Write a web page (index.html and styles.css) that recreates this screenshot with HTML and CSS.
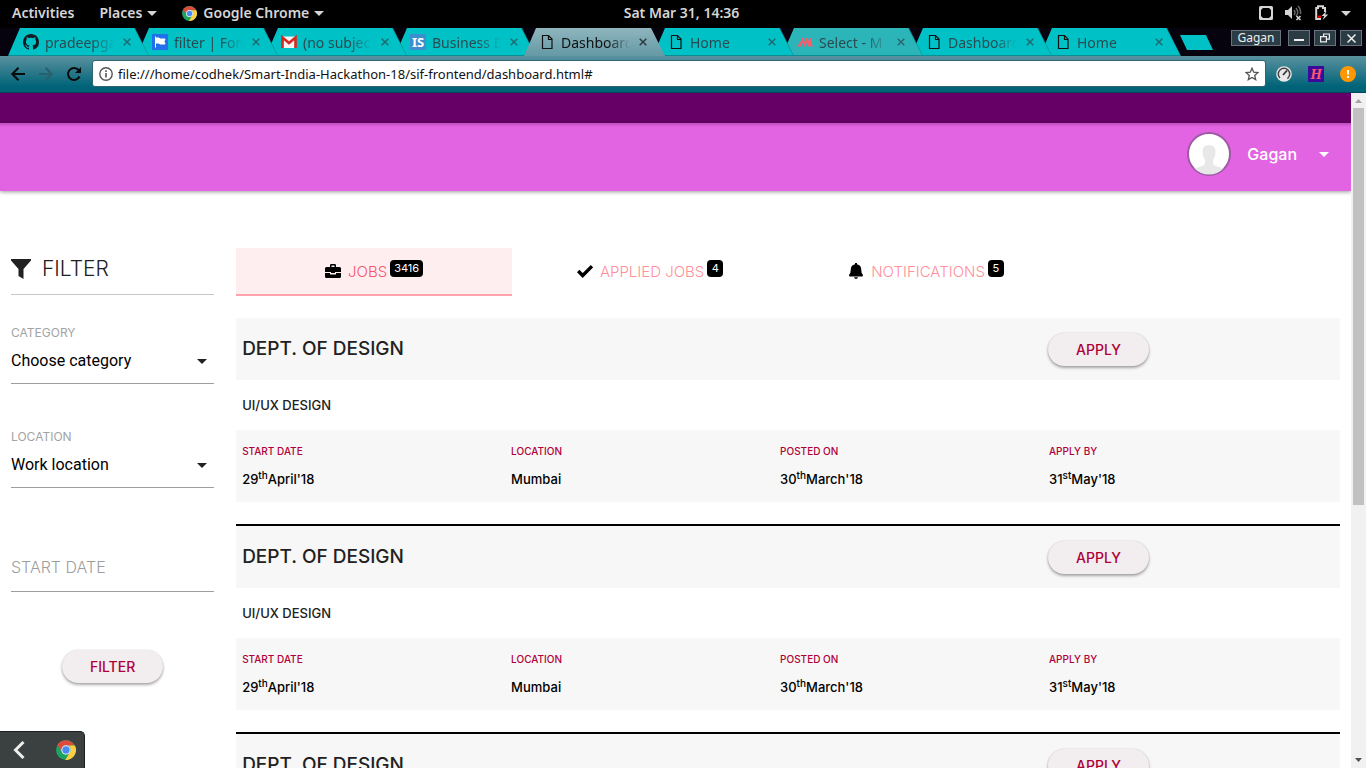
FILE: index.html
```html
<!DOCTYPE html>
<html lang="en">
<head>
<meta charset="utf-8">
<title>Dashboard</title>
<link rel="stylesheet" href="styles.css">
</head>
<body>
<svg class="defs" aria-hidden="true">
  <symbol id="chrome" viewBox="0 0 20 20">
    <circle cx="10" cy="10" r="10" fill="#1da261"/>
    <path d="M1.5 4.7A10 10 0 0 1 18.7 5.5H10A4.6 4.6 0 0 0 5.7 11.8z" fill="#dd4b3e"/>
    <path d="M18.9 5.5A10 10 0 0 1 9.2 20L14.2 12A4.6 4.6 0 0 0 12 5.5z" fill="#ffcd42"/>
    <circle cx="10" cy="10" r="4.7" fill="#f1f1f1"/><circle cx="10" cy="10" r="3.7" fill="#4a8af4"/>
  </symbol>
  <symbol id="page" viewBox="0 0 16 16"><path d="M3.5 1.5h6l3.500 3.500v9.500h-9.500zM9.500 1.500v4h3.500" fill="none" stroke="#111" stroke-width="1.200"/></symbol>
  <symbol id="close" viewBox="0 0 8 8"><path d="M.7.7l6.600 6.600M7.300.7L.7 7.300" stroke="currentColor" stroke-width="1.400"/></symbol>
  <symbol id="caret" viewBox="0 0 10 5"><path d="M0 0h10L5 5z" fill="currentColor"/></symbol>
</svg>

<header class="desk-bar">
  <div class="desk-menu">
    <button class="desk-btn">Activities</button>
    <button class="desk-btn">Places <svg class="caret"><use href="#caret"/></svg></button>
    <button class="desk-btn"><svg class="desk-logo"><use href="#chrome"/></svg>Google Chrome <svg class="caret"><use href="#caret"/></svg></button>
  </div>
  <time class="clock">Sat Mar 31, 14:36</time>
  <div class="desk-status">
    <svg width="14" height="14" viewBox="0 0 14 14"><rect x="1" y="1" width="12" height="12" rx=".5" fill="none" stroke="#d5d5d5" stroke-width="2"/><path d="M2 2h2L2 4zM12 2h-2L12 4zM2 12v-2L4 12zM12 12v-2L10 12z" fill="#d5d5d5"/></svg>
    <svg width="17" height="16" viewBox="0 0 17 16"><path d="M0 5h3l4-4v13l-4-4H0z" fill="#d5d5d5"/><path d="M9 5q2 2.500 0 5M11 3q3.500 4.500 0 8M13 1q3 3 2.500 8" fill="none" stroke="#666" stroke-width="1.500"/><path d="M11.500 11l4 4M15.500 11l-4 4" stroke="#d5d5d5" stroke-width="1.600"/></svg>
    <svg width="15" height="16" viewBox="0 0 15 16"><path d="M7 14H2.200V3H4V1.200h5V3h2v4" fill="none" stroke="#d5d5d5" stroke-width="2"/><path d="M3.500 10.500H7V13H3.500z" fill="#d00"/><path d="M12.500 6L7.500 11h2.700l-1.500 4 5.500-5.500h-3z" fill="#d5d5d5"/></svg>
    <svg class="caret"><use href="#caret"/></svg>
  </div>
</header>

<div class="tab-strip">
  <nav class="tabs" aria-label="Browser tabs">
    <a class="tab z9" href="#"><svg class="favicon" viewBox="0 0 16 16"><path fill="#161b22" d="M8 0C3.580 0 0 3.580 0 8c0 3.540 2.290 6.530 5.470 7.590.4.070.55-.17.55-.38 0-.19-.01-.82-.01-1.490-2.010.37-2.530-.49-2.690-.94-.09-.23-.48-.94-.82-1.130-.28-.15-.68-.52-.01-.53.63-.01 1.080.58 1.230.82.72 1.210 1.870.87 2.330.66.070-.52.28-.87.51-1.070-1.780-.2-3.640-.89-3.640-3.950 0-.87.31-1.590.82-2.150-.08-.2-.36-1.020.08-2.120 0 0 .67-.21 2.200.82.64-.18 1.320-.27 2-.27.68 0 1.360.09 2 .27 1.530-1.040 2.200-.82 2.200-.82.44 1.100.16 1.920.08 2.120.51.56.82 1.270.82 2.150 0 3.070-1.870 3.750-3.650 3.950.29.25.54.73.54 1.480 0 1.070-.01 1.930-.01 2.200 0 .21.15.46.55.38A8.012 8.012 0 0 0 16 8c0-4.420-3.580-8-8-8z"/></svg><span class="tab-text">pradeepga</span><svg class="tab-close"><use href="#close"/></svg></a>
    <a class="tab z8" href="#"><svg class="favicon" viewBox="0 0 16 16"><rect width="16" height="16" rx="1" fill="#2370ed"/><path d="M3.500 2.500v11M3.500 4H7l1 1h5l-1 2.500 1 2.500H8L7 9H3.500z" fill="#fff" stroke="#fff" stroke-width="1"/></svg><span class="tab-text">filter | Fon</span><svg class="tab-close"><use href="#close"/></svg></a>
    <a class="tab z7" href="#"><svg class="favicon" viewBox="0 0 16 16"><path d="M1 2.500h14V14H1z" fill="#f4f4f4"/><path d="M1.500 14V3.500L8 9l6.500-5.500V14" fill="none" stroke="#d9281f" stroke-width="2.600"/></svg><span class="tab-text">(no subjec</span><svg class="tab-close"><use href="#close"/></svg></a>
    <a class="tab z6" href="#"><span class="favicon fav-is">IS</span><span class="tab-text">Business D</span><svg class="tab-close"><use href="#close"/></svg></a>
    <a class="tab tab-active" href="#" aria-current="page"><svg class="favicon"><use href="#page"/></svg><span class="tab-text">Dashboard</span><svg class="tab-close"><use href="#close"/></svg></a>
    <a class="tab z5" href="#"><svg class="favicon"><use href="#page"/></svg><span class="tab-text">Home</span><svg class="tab-close"><use href="#close"/></svg></a>
    <a class="tab tab-hazy z4" href="#"><svg class="favicon" viewBox="0 0 16 16"><path d="M1 11.500h2.500L5.500 5l2 6.500L9.500 5l1.800 6.500L13 5l1 6.500h1.500" fill="none" stroke="#f2606e" stroke-width="2.200" stroke-linejoin="round"/></svg><span class="tab-text">Select - M</span><svg class="tab-close"><use href="#close"/></svg></a>
    <a class="tab z3" href="#"><svg class="favicon"><use href="#page"/></svg><span class="tab-text">Dashboard</span><svg class="tab-close"><use href="#close"/></svg></a>
    <a class="tab z2" href="#"><svg class="favicon"><use href="#page"/></svg><span class="tab-text">Home</span><svg class="tab-close"><use href="#close"/></svg></a>
    <button class="new-tab" aria-label="New tab"></button>
  </nav>
  <div class="window-controls">
    <button class="win-btn win-user">Gagan</button>
    <button class="win-btn" aria-label="Minimize"><svg width="10" height="10" viewBox="0 0 10 10"><path d="M0 7h10" stroke="#eee" stroke-width="2"/></svg></button>
    <button class="win-btn" aria-label="Restore"><svg width="10" height="10" viewBox="0 0 10 10"><path d="M.6 3.600h5.800v5.200H.6zM3.600 3.500V1h5.800v5.200h-3" fill="none" stroke="#eee" stroke-width="1.200"/></svg></button>
    <button class="win-btn" aria-label="Close window"><svg width="9" height="9" viewBox="0 0 9 9"><path d="M.5.500l8 8M8.500.500l-8 8" stroke="#eee" stroke-width="1.500"/></svg></button>
  </div>
</div>

<div class="toolbar">
  <button class="nav-btn" aria-label="Back"><svg width="16" height="16" viewBox="0 0 16 16"><path d="M15 8H2.500M8.500 1.800L2.300 8l6.200 6.200" fill="none" stroke="#0a0a0a" stroke-width="2"/></svg></button>
  <button class="nav-btn" aria-label="Forward"><svg width="16" height="16" viewBox="0 0 16 16"><path d="M1 8h12.500M7.500 1.800L13.700 8l-6.200 6.200" fill="none" stroke="#2a5f6c" stroke-width="2"/></svg></button>
  <button class="nav-btn" aria-label="Reload"><svg width="16" height="16" viewBox="0 0 16 16"><path d="M13.500 10.500A6 6 0 1 1 12.800 4.300" fill="none" stroke="#0a0a0a" stroke-width="2"/><path d="M15 1v6H9z" fill="#0a0a0a"/></svg></button>
  <div class="address">
    <svg width="14" height="14" viewBox="0 0 14 14"><circle cx="7" cy="7" r="6.200" fill="none" stroke="#555" stroke-width="1.400"/><path d="M7 6v4.500M7 3.300v1.600" stroke="#555" stroke-width="1.600"/></svg>
    <input class="url" aria-label="Address" value="file:///home/codhek/Smart-India-Hackathon-18/sif-frontend/dashboard.html#">
    <svg width="14" height="14" viewBox="0 0 14 14"><path d="M7 1.200l1.700 4 4.300.4-3.300 2.800 1 4.200L7 10.400l-3.700 2.200 1-4.200L1 5.600l4.300-.4z" fill="none" stroke="#555" stroke-width="1.300"/></svg>
  </div>
  <div class="extensions">
    <svg width="16" height="16" viewBox="0 0 16 16"><circle cx="8" cy="8" r="7.800" fill="#e8e8e8"/><circle cx="8" cy="8" r="5.700" fill="none" stroke="#444" stroke-width="1.500" stroke-dasharray="27 9" transform="rotate(135 8 8)"/><path d="M7 9l4-4.500" stroke="#333" stroke-width="1.800"/></svg>
    <span class="ext-h">H</span>
    <svg width="16" height="16" viewBox="0 0 16 16"><circle cx="8" cy="8" r="8" fill="#ff9800"/><path d="M8 4v4.500M8 10v2" stroke="#fff" stroke-width="2"/></svg>
  </div>
</div>

<div class="viewport">
  <div class="page">
    <div class="status-strip"></div>
    <nav class="navbar">
      <svg class="avatar" viewBox="0 0 44 44"><defs><clipPath id="face"><circle cx="22" cy="22" r="20.500"/></clipPath></defs><circle cx="22" cy="22" r="21" fill="#fff" stroke="#9c5aa4" stroke-width="2"/><path clip-path="url(#face)" d="M15.500 19q0-6 6.500-6t6.500 6-2.500 9v3q0 2 4 3.500 8 2 11 4.500v6H3v-6q3-2.500 11-4.500 4-1.500 4-3.500v-3q-2.500-3-2.500-9z" fill="#e8e8e8"/></svg>
      <a class="user-link" href="#">Gagan <svg class="caret"><use href="#caret"/></svg></a>
    </nav>

    <div class="layout">
      <form class="sidebar">
        <h1 class="filter-title"><svg width="20" height="20" viewBox="0 0 20 20"><path d="M0 0h20v1.500L12.500 10v10L7.500 17v-7L0 1.500z" fill="#212121"/></svg>FILTER</h1>
        <div class="field">
          <label class="field-label" for="category">CATEGORY</label>
          <div class="select-box"><select class="control" id="category"><option>Choose category</option></select><svg class="caret"><use href="#caret"/></svg></div>
        </div>
        <div class="field">
          <label class="field-label" for="location">LOCATION</label>
          <div class="select-box"><select class="control" id="location"><option>Work location</option></select><svg class="caret"><use href="#caret"/></svg></div>
        </div>
        <div class="field">
          <input class="control date" id="start" type="text" placeholder="START DATE" aria-label="Start date">
        </div>
        <button class="pill" type="button">FILTER</button>
      </form>

      <main class="main">
        <nav class="sections">
          <a class="section section-on" href="#"><svg width="16" height="16" viewBox="0 0 16 16"><path d="M5 4V2.200Q5 1 6.200 1h3.600Q11 1 11 2.200V4h3.500Q16 4 16 5.500V9H10v1H6V9H0V5.500Q0 4 1.500 4zM6.500 4h3V2.500h-3zM0 10h5v1.500h6V10h5v3.500q0 1.500-1.500 1.500h-13Q0 15 0 13.500z" fill="#000" fill-rule="evenodd"/></svg>JOBS<span class="badge">3416</span></a>
          <a class="section" href="#"><svg width="16" height="16" viewBox="0 0 16 16"><path d="M1.200 8L5.700 12.500 15 3.200" fill="none" stroke="#000" stroke-width="3.400"/></svg>APPLIED JOBS<span class="badge">4</span></a>
          <a class="section" href="#"><svg width="16" height="16" viewBox="0 0 16 16"><path d="M7 0h2v1.200q4.200 1 4.200 5 0 4 1.600 5.300Q15.500 13.500 14 13.500H2Q.5 13.500 1.200 11.500 2.800 10.200 2.800 6.200q0-4 4.200-5zM6 14.200h4Q9.500 16 8 16t-2-1.800z" fill="#000"/></svg>NOTIFICATIONS<span class="badge">5</span></a>
        </nav>

        <article class="job">
          <header class="job-head"><h2 class="dept">DEPT. OF DESIGN</h2><div class="job-action"><button class="pill">APPLY</button></div></header>
          <h3 class="role">UI/UX DESIGN</h3>
          <table class="facts">
            <thead><tr><th>START DATE</th><th>LOCATION</th><th>POSTED ON</th><th>APPLY BY</th></tr></thead>
            <tbody><tr><td>29<sup>th</sup>April'18</td><td>Mumbai</td><td>30<sup>th</sup>March'18</td><td>31<sup>st</sup>May'18</td></tr></tbody>
          </table>
        </article>
        <article class="job">
          <header class="job-head"><h2 class="dept">DEPT. OF DESIGN</h2><div class="job-action"><button class="pill">APPLY</button></div></header>
          <h3 class="role">UI/UX DESIGN</h3>
          <table class="facts">
            <thead><tr><th>START DATE</th><th>LOCATION</th><th>POSTED ON</th><th>APPLY BY</th></tr></thead>
            <tbody><tr><td>29<sup>th</sup>April'18</td><td>Mumbai</td><td>30<sup>th</sup>March'18</td><td>31<sup>st</sup>May'18</td></tr></tbody>
          </table>
        </article>
        <article class="job">
          <header class="job-head"><h2 class="dept">DEPT. OF DESIGN</h2><div class="job-action"><button class="pill">APPLY</button></div></header>
        </article>
      </main>
    </div>
  </div>
  <div class="scrollbar" aria-hidden="true">
    <svg class="scroll-arrow" viewBox="0 0 15 15"><path d="M4 10h7L7.500 6z" fill="#a3a3a3"/></svg>
    <div class="scroll-track"><div class="scroll-thumb"></div><div class="scroll-rest"></div></div>
    <svg class="scroll-arrow" viewBox="0 0 15 15"><path d="M4 5h7L7.500 9z" fill="#505050"/></svg>
  </div>
</div>

<div class="dock">
  <svg width="12" height="18" viewBox="0 0 12 18"><path d="M10.500 1L2.500 9l8 8" fill="none" stroke="#eeeeec" stroke-width="3"/></svg>
  <svg width="20" height="20"><use href="#chrome"/></svg>
</div>
</body>
</html>
```
FILE: styles.css
```css
* { box-sizing: border-box; }
html, body { height: 100%; }
body {
  margin: 0;
  display: flex;
  flex-direction: column;
  overflow: hidden;
  background: #fff;
  font-family: Inter, "Open Sans", sans-serif;
  color: #212121;
}
button, input, select { font: inherit; margin: 0; }
button { border: 0; padding: 0; background: none; cursor: pointer; }
a { color: inherit; text-decoration: none; }
svg { flex: none; display: block; }
.defs { position: absolute; width: 0; height: 0; }
.caret { width: 10px; height: 5px; }

/* Desktop bar */
.desk-bar {
  flex: none;
  height: 28px;
  padding: 0 15px 2px 12px;
  display: grid;
  grid-template-columns: 1fr auto 1fr;
  align-items: center;
  background: #000;
  color: #d5d5d5;
  font: 600 14px/20px "Noto Sans", "Open Sans", sans-serif;
}
.desk-menu { display: flex; gap: 25px; }
.desk-btn { display: flex; align-items: center; gap: 5px; color: inherit; }
.desk-logo { width: 15px; height: 15px; margin-right: 1px; }
.desk-status { display: flex; justify-content: flex-end; align-items: center; gap: 12px; }

/* Browser tabs */
.tab-strip {
  flex: none;
  height: 28px;
  display: flex;
  justify-content: space-between;
  background: #06030f;
  font-family: "Noto Sans", "Open Sans", sans-serif;
}
.tabs { display: flex; flex: 1; min-width: 0; padding-left: 8px; }
.tab {
  position: relative;
  isolation: isolate;
  flex: 0 1 141px;
  min-width: 0;
  margin-right: -12px;
  padding: 0 18px 0 15px;
  display: flex;
  align-items: center;
  gap: 6px;
  background: #078e94;
  color: #2b4a50;
  font-size: 14px;
  clip-path: polygon(0 100%, 12px 0, calc(100% - 14px) 0, 100% 100%);
}
.tab::before {
  content: "";
  position: absolute;
  inset: 0 1px 1px 0;
  z-index: -1;
  background: #00c1c6;
  clip-path: polygon(0 100%, 12px 0, calc(100% - 14px) 0, 100% 100%);
}
.tab-hazy::before { background: #2cb5b9; }
.tab-active { z-index: 10; background: linear-gradient(#8fb5be, #6499a5); color: #111; }
.tab-active::before { display: none; }
.z9 { z-index: 9; }
.z8 { z-index: 8; }
.z7 { z-index: 7; }
.z6 { z-index: 6; }
.z5 { z-index: 5; }
.z4 { z-index: 4; }
.z3 { z-index: 3; }
.z2 { z-index: 2; }
.favicon { flex: none; width: 16px; height: 16px; }
.fav-is { background: #3b8fd0; color: #fff; font: 700 13px/16px "Noto Sans", sans-serif; text-align: center; }
.tab-text {
  flex: 1;
  min-width: 0;
  overflow: hidden;
  white-space: nowrap;
  -webkit-mask-image: linear-gradient(to right, #000 65%, transparent 96%);
  mask-image: linear-gradient(to right, #000 65%, transparent 96%);
}
.tab-close { width: 8px; height: 8px; opacity: .75; }
.new-tab {
  flex: none;
  width: 33px;
  height: 15px;
  margin: 7px 0 0 11px;
  background: #00c1c6;
  clip-path: polygon(0 0, 26px 0, 100% 100%, 7px 100%);
}
.window-controls { display: flex; gap: 4px; padding: 2px 4px 0 0; }
.win-btn {
  width: 22px;
  height: 16px;
  display: flex;
  align-items: center;
  justify-content: center;
  background: #2c3c44;
  border: 1px solid #67747b;
  color: #eee;
}
.win-user { width: 50px; margin-right: 3px; font-size: 12px; line-height: 14px; }

/* Toolbar */
.toolbar {
  flex: none;
  height: 37px;
  padding: 5px 10px 6px;
  display: flex;
  align-items: center;
  gap: 12px;
  background: linear-gradient(#5a919f, #006378 85%);
  border-bottom: 1px solid #00485a;
}
.address {
  flex: 1;
  min-width: 0;
  height: 27px;
  margin-left: -2px;
  padding: 0 6px;
  display: flex;
  align-items: center;
  gap: 5px;
  background: #fff;
  border: 1px solid #2c6470;
  border-radius: 3px;
}
.url {
  flex: 1;
  min-width: 0;
  padding: 0;
  border: 0;
  outline: 0;
  color: #111;
  font: 13px/20px "Noto Sans", "Open Sans", sans-serif;
}
.extensions { display: flex; align-items: center; gap: 16px; }
.toolbar .extensions { margin-left: -2px; }
.ext-h { width: 16px; height: 16px; background: #3a0a9a; color: #ff5a6a; font: italic 700 15px/16px "Liberation Serif", serif; text-align: center; }

/* Page */
.viewport { flex: 1; min-height: 0; display: flex; }
.page { flex: 1; min-width: 0; overflow: hidden; }
.status-strip { height: 30px; background: #660066; }
.navbar {
  height: 68px;
  padding: 0 22px 6px 0;
  display: flex;
  align-items: center;
  justify-content: flex-end;
  gap: 16px;
  background: linear-gradient(#bf4dbf, #e364e3 4px);
  box-shadow: 0 1px 4px rgba(0, 0, 0, .4);
  color: #fff;
}
.avatar { width: 44px; height: 44px; }
.user-link { display: flex; align-items: center; gap: 22px; font-size: 16px; font-weight: 500; }
.layout { display: grid; grid-template-columns: 1fr 5fr; padding-top: 57px; }

/* Filters */
.sidebar { padding: 0 11px; display: flex; flex-direction: column; }
.filter-title {
  height: 47px;
  margin: 0 0 30px;
  padding-bottom: 5px;
  display: flex;
  align-items: center;
  gap: 11px;
  border-bottom: 1px solid #c6c6c6;
  font-size: 21px;
  font-weight: 300;
}
.field { height: 104px; }
.field-label { display: block; font-size: 12px; line-height: 16px; color: #a3a3a3; }
.select-box { display: flex; align-items: center; }
.select-box .caret { margin: 0 7px 2px -17px; pointer-events: none; color: #212121; }
.control {
  width: 100%;
  height: 43px;
  padding: 0 0 3px;
  border: 0;
  border-bottom: 1px solid #9e9e9e;
  border-radius: 0;
  appearance: none;
  background: none;
  outline: 0;
  color: #000;
  font: 16px/20px Roboto, sans-serif;
}
.date { margin-top: 16px; padding: 6px 0 12px; font: 16px/24px Inter, sans-serif; }
.date::placeholder { color: #9e9e9e; font-weight: 300; opacity: 1; }
.pill {
  width: 101px;
  height: 33px;
  border-radius: 17px;
  background: #f2eef0;
  box-shadow: 0 2px 3px rgba(0, 0, 0, .32), 0 0 2px rgba(0, 0, 0, .14);
  color: #b0003a;
  font-size: 14px;
  font-weight: 500;
}
.sidebar .pill { align-self: center; margin-top: 13px; }

/* Section tabs */
.sections { display: grid; grid-template-columns: repeat(4, 1fr); }
.section {
  height: 48px;
  display: flex;
  align-items: center;
  justify-content: center;
  gap: 7px;
  border-bottom: 2px solid transparent;
  color: #ff8f9a;
  font-size: 15px;
  font-weight: 300;
}
.section-on { background: #ffeeef; border-color: #ffa3ae; color: #f4566b; }
.badge {
  min-width: 16px;
  margin: 0 0 6px -4px;
  padding: 0 4px;
  border-radius: 4px;
  background: #000;
  color: #fff;
  font-size: 11px;
  font-weight: 400;
  line-height: 17px;
  text-align: center;
}

/* Jobs */
.main { min-width: 0; padding: 0 11px; }
.sections { margin-bottom: 22px; }
.job { padding-bottom: 22px; border-bottom: 2px solid #000; }
.job-head {
  height: 62px;
  padding-right: 28px;
  display: grid;
  grid-template-columns: repeat(4, 1fr);
  align-items: center;
  background: #f7f7f7;
}
.dept { grid-column: 1 / 4; margin: 0; padding: 0 0 2px 6px; font-size: 19px; font-weight: 500; }
.job-action { padding-left: 5px; }
.role { height: 50px; margin: 0; padding-left: 6px; font-size: 13px; font-weight: 500; line-height: 50px; }
.facts { width: 100%; height: 72px; padding: 13px 28px 3px 0; border-spacing: 0; table-layout: fixed; background: #f7f7f7; }
.facts th, .facts td { padding: 0 6px; text-align: left; font-weight: 500; line-height: 16px; }
.facts th { color: #b0003a; font-size: 10px; }
.facts td { color: #000; font-size: 13px; }
.facts sup { font-size: 10px; line-height: 0; }

/* Scrollbar */
.scrollbar { flex: none; width: 15px; display: flex; flex-direction: column; background: #f1f1f1; }
.scroll-arrow { width: 15px; height: 15px; }
.scroll-track { flex: 1; padding: 0 2px; display: flex; flex-direction: column; }
.scroll-thumb { flex: 8; background: #c1c1c1; }
.scroll-rest { flex: 5; }

/* Corner dock */
.dock {
  position: absolute;
  left: 0;
  bottom: 0;
  z-index: 20;
  width: 85px;
  height: 37px;
  padding: 0 8px 0 13px;
  display: flex;
  align-items: center;
  justify-content: space-between;
  background: #3b4040;
  border: 1px solid #1b1f1f;
  border-width: 1px 1px 0 0;
  border-top-right-radius: 5px;
}
```
